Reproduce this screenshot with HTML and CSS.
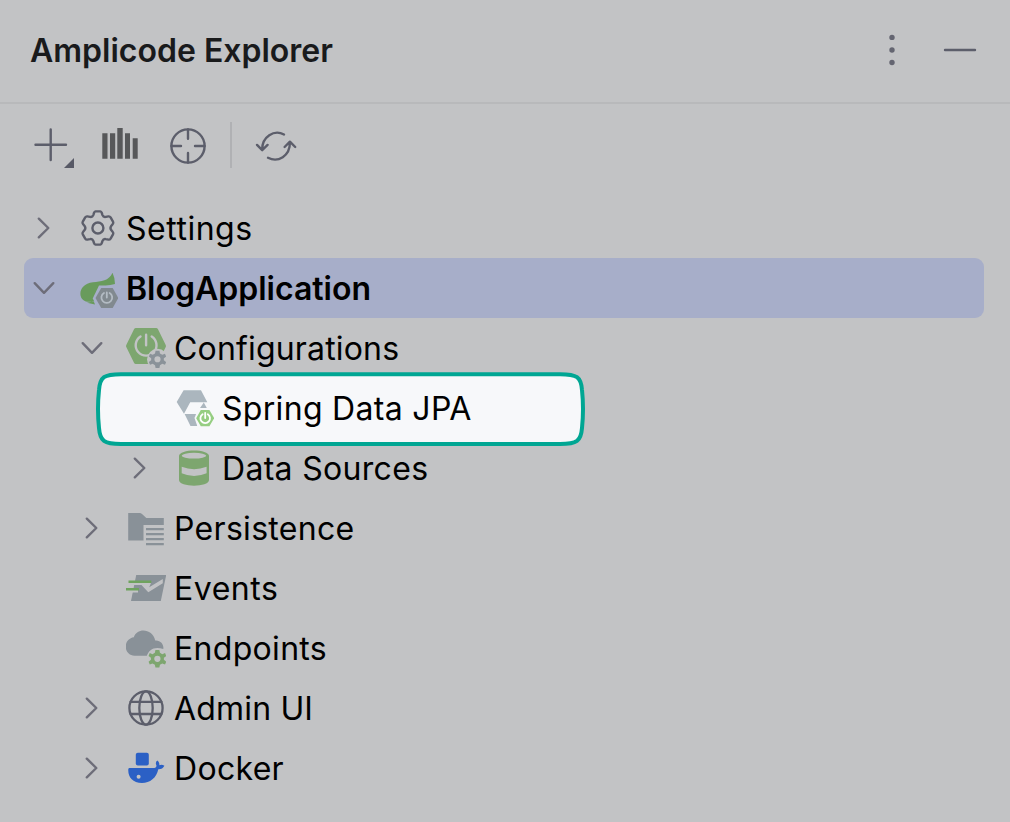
FILE: index.html
```html
<!DOCTYPE html>
<html lang="en">
<head>
<meta charset="utf-8">
<title>Amplicode Explorer</title>
<link rel="stylesheet" href="styles.css">
</head>
<body>
<svg class="defs" width="0" height="0">
  <defs>
    <path id="gear" fill-rule="evenodd" d="M-2-9H2L2.6-6.1 5-4.7 7.8-5.8 9-2.9 6.6-1V1L9 2.9 7.8 5.8 5 4.7 2.6 6.1 2 9H-2L-2.6 6.1-5 4.7-7.8 5.8-9 2.9-6.6 1V-1L-9-2.9-7.8-5.8-5-4.7-2.6-6.1ZM0-3.2A3.2 3.2 0 1 0 0 3.2 3.2 3.2 0 1 0 0-3.2Z"/>
    <path id="right" d="M-5.2-9.3 4.3 0-5.2 9.3"/>
    <path id="down" d="M-9.3-4.8 0 4.8 9.3-4.8"/>
  </defs>
</svg>
<div class="panel">
  <header class="header">
    <h1 class="title">Amplicode Explorer</h1>
    <svg class="header-actions" viewBox="880 30 100 40">
      <g class="muted"><circle cx="892" cy="37.4" r="2.7"/><circle cx="892" cy="50" r="2.7"/><circle cx="892" cy="62.5" r="2.7"/></g>
      <path class="line" d="M945 50H975"/>
    </svg>
  </header>
  <div class="toolbar">
    <svg class="tool add" viewBox="30 122 48 48"><path class="line" d="M35.5 144.7H66M50.7 129.5V160"/><path class="ink" d="M74 158V168H64Z"/></svg>
    <svg class="tool bars" viewBox="98 122 44 48"><path d="M102.3 133.3h5.2v25.5h-5.2zM110 133.3h5.2v25.5H110zM117.3 128h5.4v30.8h-5.4zM125 133.3h5v25.5h-5zM132.7 138.3h5v20.5h-5z"/></svg>
    <svg class="tool target" viewBox="164 122 48 48"><g class="line"><circle cx="188" cy="146" r="16.6"/><path d="M188 129.5V138.7M188 153V162.5M171.5 146H181M195 146H204.5"/></g></svg>
    <span class="divider"></span>
    <svg class="tool sync" viewBox="252 122 48 48"><g class="line"><path d="M284 134.5C274 129 262 137 262.2 149.5M257 144.9 262.2 150.2 267.6 144.9M268 157.7C278 163 290 156 289.9 142.5M284.6 147 289.9 141.7 295.2 147"/></g></svg>
  </div>
  <main class="tree">
    <div class="row">
      <svg class="arrow" viewBox="-20 -20 40 40"><use href="#right"/></svg>
      <svg class="icon" viewBox="78 208 40 40"><g class="line"><path d="M95.5 211.4H100.3Q101.4 211.5 101.8 213L102.5 215.1Q103.4 217.4 105.8 216.9L108.5 216.4Q109.8 216.2 110.6 217.4L113 221.6Q113.7 223 112.8 224L111.2 225.9Q109.7 228 111.2 230.1L112.8 232Q113.7 233 113 234.4L110.6 238.6Q109.8 239.8 108.5 239.6L105.8 239.1Q103.4 238.6 102.5 240.9L101.8 243Q101.4 244.5 100.3 244.6H95.5Q94.4 244.5 94 243L93.3 240.9Q92.4 238.6 90 239.1L87.3 239.6Q86 239.8 85.2 238.6L82.8 234.4Q82.1 233 83 232L84.6 230.1Q86.1 228 84.6 225.9L83 224Q82.1 223 82.8 221.6L85.2 217.4Q86 216.2 87.3 216.4L90 216.9Q92.4 217.4 93.3 215.1L94 213Q94.4 211.5 95.5 211.4Z"/><circle cx="97.9" cy="228" r="5.5"/></g></svg>
      <span class="label wide">Settings</span>
    </div>
    <div class="row selected">
      <svg class="arrow" viewBox="-20 -20 40 40"><use href="#down"/></svg>
      <svg class="icon" viewBox="78 268 40 40"><path fill="#699b5c" d="M112.5 272.8C109 281 101 281.5 93 282.3 77.5 283.8 77 300.5 87.5 301.7H94L97.5 295.5 101 287 115 284Q115 278 112.5 272.8ZM87 302.8 93.7 301.3 95 304.5Z"/><path fill="#a7aec9" d="M99 285.5H113L120 297.5 113 310H99L92.7 298.5Z"/><path fill="#81898f" d="M101.2 288H112.7L118.3 298 112.7 308H101.2L95.5 298Z"/><path class="power pale" d="M104 292.9A5.4 5.4 0 1 0 109.6 292.9M106.8 292.5V297.5"/></svg>
      <span class="label">BlogApplication</span>
    </div>
    <div class="row level1">
      <svg class="arrow" viewBox="-20 -20 40 40"><use href="#down"/></svg>
      <svg class="icon" viewBox="126 328 40 40"><path class="green" d="M135.8 328H156.2Q157.3 328 158 329.2L165.6 344.7Q166.3 346 165.6 347.3L158 362.7Q157.4 364 156.2 364H135.8Q134.6 364 134 362.7L126.4 347.3Q125.7 346 126.4 344.7L134 329.2Q134.7 328 135.8 328Z"/><path fill="none" stroke="#c2c3c5" stroke-width="2.4" stroke-linecap="round" d="M140.5 336.5A10.4 10.4 0 1 0 151.7 336.5M146.1 334.7V345.3"/><circle cx="157.5" cy="359.3" r="10.5" fill="#c2c3c5"/><use href="#gear" transform="translate(157.5 359.3) scale(.96)" fill="#8a9299"/></svg>
      <span class="label snug">Configurations</span>
    </div>
    <div class="row level2 spotlight">
      <svg class="highlight" viewBox="94 370 493 78"><path d="M121 374.2H560C577 374.2 581 377 582 390Q584 409 582 428C581 441 577 444 560 444H121C104 444 100 441 99 428Q97 409 99 390C100 377 104 374.2 121 374.2Z"/></svg>
      <span class="arrow"></span>
      <svg class="icon" viewBox="174 388 40 40"><path fill="#abb6be" d="M183.6 390.2H201L207.3 402.3H190.2L184 413.7 176.7 402ZM184.6 414H199.5L195.7 419 197.6 426.1H190.5ZM203.8 402.5 206.8 408H200Z"/><path fill="#f7f8fa" d="M198.5 408H212L217 418 211 428H198L194.5 418Z"/><path fill="#96ce82" d="M200.8 410H209.4L214.2 418.2 209.4 426.3H200.8L196.2 418.2Z"/><path class="power light" d="M202.6 414.2A4.8 4.8 0 1 0 207.8 414.2M205.2 412.8V418"/></svg>
      <span class="label loose">Spring Data JPA</span>
    </div>
    <div class="row level2">
      <svg class="arrow" viewBox="-20 -20 40 40"><use href="#right"/></svg>
      <svg class="icon" viewBox="174 448 40 40"><path class="green" d="M179 456C179 448.5 209 448.5 209 456V480C209 487.5 179 487.5 179 480Z"/><ellipse cx="194" cy="455.7" rx="12.2" ry="2.9" fill="#c2c3c5"/><path fill="#c2c3c5" d="M181.7 466.8Q194 471.5 206.6 466.8V473.3Q194 478.7 181.7 473.3Z"/></svg>
      <span class="label loose">Data Sources</span>
    </div>
    <div class="row level1">
      <svg class="arrow" viewBox="-20 -20 40 40"><use href="#right"/></svg>
      <svg class="icon" viewBox="126 508 40 40"><path class="gray" d="M128.2 513H139.5Q141 513 142.3 514.2L146.3 518H163.8V525H143.5V540.5H128.2ZM146 528h17.8v2.2H146zM146 533h17.8v2.2H146zM146 538h17.8v2.2H146zM146 543h17.8v2.2H146z"/></svg>
      <span class="label loose">Persistence</span>
    </div>
    <div class="row level1">
      <span class="arrow"></span>
      <svg class="icon" viewBox="126 568 40 40"><path class="gray" d="M136.2 575H166.2L160.8 601H131Z"/><path fill="#c2c3c5" d="M128 583H151L149.2 587.2 162.8 579V583.2L148.3 592.2 141.5 585H128ZM125 590H138V592.4H125Z"/><path fill="#6fa35e" d="M128.5 580.5h22.8v2.5h-22.8zM126 587.9h13v2.5h-13z"/></svg>
      <span class="label wide">Events</span>
    </div>
    <div class="row level1">
      <span class="arrow"></span>
      <svg class="icon" viewBox="126 628 40 40"><path class="gray" d="M134.5 655.7C123 655 122.8 639 133.8 637.2 137 627 153 628.5 155.2 640.5 161 640 164 645 163.3 649 154 646 149 649.8 146.8 655.7Z"/><use class="green" href="#gear" transform="translate(157.4 658.8) scale(.98)"/></svg>
      <span class="label loose">Endpoints</span>
    </div>
    <div class="row level1">
      <svg class="arrow" viewBox="-20 -20 40 40"><use href="#right"/></svg>
      <svg class="icon" viewBox="126 688 40 40"><g class="line thin"><circle cx="146" cy="708" r="16.6"/><ellipse cx="146" cy="708" rx="6.7" ry="16.6"/><path d="M130.6 701.8H161.4M130.6 714H161.4"/></g></svg>
      <span class="label snug">Admin UI</span>
    </div>
    <div class="row level1">
      <svg class="arrow" viewBox="-20 -20 40 40"><use href="#right"/></svg>
      <svg class="icon" viewBox="126 748 40 40"><rect fill="#2b60c5" x="135.8" y="752.8" width="13" height="12.6" rx="2"/><path fill="#2b60c5" d="M129.5 768H154.5Q157 767.8 156.3 765 155 762 157.5 760.6 159.5 762.3 159.4 765.2 162 764.2 164.4 765.8 162.5 769.5 158.3 769.3C156.5 778 150 783 142 783 132.5 783 127.8 777 128.3 769.2Q128.5 768 129.5 768Z"/><circle cx="138.6" cy="776.8" r="2" fill="#c2c3c5"/></svg>
      <span class="label loose">Docker</span>
    </div>
  </main>
</div>
</body>
</html>
```
FILE: styles.css
```css
* { box-sizing: border-box; }
body {
  margin: 0;
  background: #c2c3c5;
  color: #000;
  font-family: Inter, "Liberation Sans", sans-serif;
}
.defs { display: block; height: 0; }
.panel { width: 1010px; height: 822px; overflow: hidden; }
.header {
  display: flex;
  align-items: center;
  justify-content: space-between;
  height: 104px;
  padding: 0 30px 2px;
  border-bottom: 2px solid #b8b9bb;
}
.title {
  margin: 2px 0 0;
  color: #191a1c;
  font-size: 32px;
  font-weight: 600;
  line-height: 40px;
  white-space: nowrap;
}
.header-actions { width: 100px; height: 40px; }
.muted { fill: #646571; }
.ink { fill: #575966; }
.line { fill: none; stroke: #5c5e6b; stroke-width: 2.4; stroke-linecap: round; stroke-linejoin: round; }
.thin { stroke-width: 2.3; }
.toolbar { display: flex; align-items: center; height: 84px; padding: 0 30px; }
.tool { width: 48px; height: 48px; flex: none; }
.bars { width: 44px; margin: 0 22px 0 20px; fill: #57585a; }
.divider { width: 2px; height: 46px; margin: 0 20px 2px 18px; background: #b0b1b4; }
.tree { padding: 10px 26px 0 24px; }
.row { display: flex; align-items: center; height: 60px; position: relative; border-radius: 9px; }
.selected { background: #a7aec9; }
.level1 { padding-left: 48px; }
.level2 { padding-left: 96px; }
.arrow { flex: none; width: 40px; height: 40px; fill: none; stroke: #6d6d79; stroke-width: 2.4; stroke-linecap: round; stroke-linejoin: round; }
.icon { position: relative; flex: none; width: 40px; height: 40px; margin-left: 14px; }
.label { position: relative; margin: 2px 0 0 8px; font-size: 32px; line-height: 40px; white-space: nowrap; }
.selected .label { font-weight: 600; }
.snug { letter-spacing: 0.17px; }
.loose { letter-spacing: 0.31px; }
.wide { letter-spacing: 0.52px; }
.highlight { position: absolute; left: 70px; top: -8px; width: 493px; height: 78px; fill: #f7f8fa; stroke: #00a693; stroke-width: 4; }
.green { fill: #7da66f; }
.gray { fill: #899198; }
.power { fill: none; stroke-width: 1.8; stroke-linecap: round; }
.pale { stroke: #b4bcc4; }
.light { stroke: #fff; }
```
